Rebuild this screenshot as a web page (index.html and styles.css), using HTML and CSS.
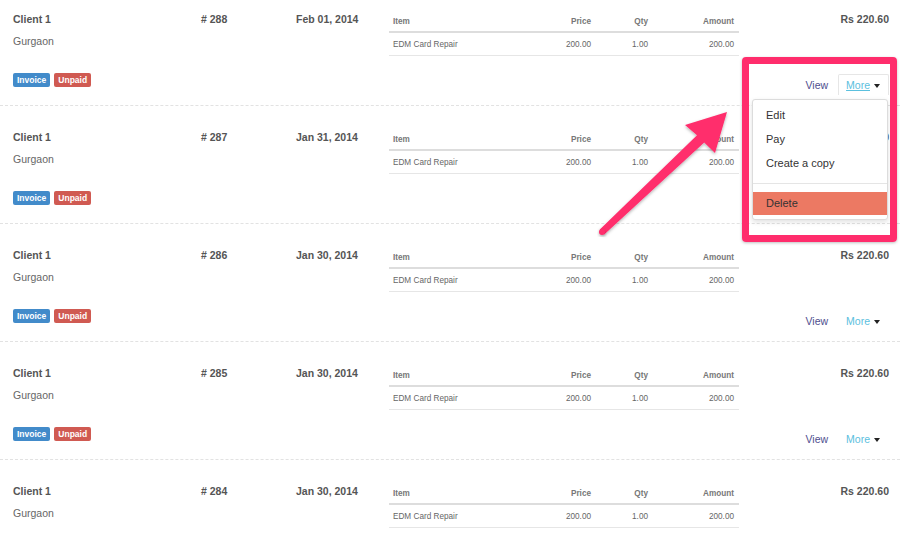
FILE: index.html
```html
<!DOCTYPE html>
<html>
<head>
<meta charset="utf-8">
<link rel="stylesheet" href="styles.css">
</head>
<body>
<div class="list">
  <div class="row">
    <div class="client">
      <div class="name">Client 1</div>
      <div class="city">Gurgaon</div>
      <div class="badges"><span class="badge invoice">Invoice</span><span class="badge unpaid">Unpaid</span></div>
    </div>
    <div class="num"># 288</div>
    <div class="date">Feb 01, 2014</div>
    <table class="items">
      <colgroup><col class="c1"><col class="c2"><col class="c3"><col class="c4"></colgroup>
      <thead><tr><th class="l">Item</th><th>Price</th><th>Qty</th><th>Amount</th></tr></thead>
      <tbody><tr><td class="l">EDM Card Repair</td><td>200.00</td><td>1.00</td><td>200.00</td></tr></tbody>
    </table>
    <div class="side">
      <div class="total">Rs 220.60</div>
      <div class="actions">
        <a class="view">View</a>
        <span class="more open"><span class="more-link u">More</span><span class="caret"></span>
          <div class="menu">
            <div class="mi">Edit</div>
            <div class="mi">Pay</div>
            <div class="mi">Create a copy</div>
            <div class="divider"></div>
            <div class="mi danger">Delete</div>
          </div>
        </span>
      </div>
    </div>
  </div>

  <div class="row">
    <div class="client">
      <div class="name">Client 1</div>
      <div class="city">Gurgaon</div>
      <div class="badges"><span class="badge invoice">Invoice</span><span class="badge unpaid">Unpaid</span></div>
    </div>
    <div class="num"># 287</div>
    <div class="date">Jan 31, 2014</div>
    <table class="items">
      <colgroup><col class="c1"><col class="c2"><col class="c3"><col class="c4"></colgroup>
      <thead><tr><th class="l">Item</th><th>Price</th><th>Qty</th><th>Amount</th></tr></thead>
      <tbody><tr><td class="l">EDM Card Repair</td><td>200.00</td><td>1.00</td><td>200.00</td></tr></tbody>
    </table>
    <div class="side">
      <div class="total">Rs 220.60</div>
    </div>
  </div>

  <div class="row">
    <div class="client">
      <div class="name">Client 1</div>
      <div class="city">Gurgaon</div>
      <div class="badges"><span class="badge invoice">Invoice</span><span class="badge unpaid">Unpaid</span></div>
    </div>
    <div class="num"># 286</div>
    <div class="date">Jan 30, 2014</div>
    <table class="items">
      <colgroup><col class="c1"><col class="c2"><col class="c3"><col class="c4"></colgroup>
      <thead><tr><th class="l">Item</th><th>Price</th><th>Qty</th><th>Amount</th></tr></thead>
      <tbody><tr><td class="l">EDM Card Repair</td><td>200.00</td><td>1.00</td><td>200.00</td></tr></tbody>
    </table>
    <div class="side">
      <div class="total">Rs 220.60</div>
      <div class="actions">
        <a class="view">View</a>
        <span class="more"><span class="more-link">More</span><span class="caret"></span></span>
      </div>
    </div>
  </div>

  <div class="row">
    <div class="client">
      <div class="name">Client 1</div>
      <div class="city">Gurgaon</div>
      <div class="badges"><span class="badge invoice">Invoice</span><span class="badge unpaid">Unpaid</span></div>
    </div>
    <div class="num"># 285</div>
    <div class="date">Jan 30, 2014</div>
    <table class="items">
      <colgroup><col class="c1"><col class="c2"><col class="c3"><col class="c4"></colgroup>
      <thead><tr><th class="l">Item</th><th>Price</th><th>Qty</th><th>Amount</th></tr></thead>
      <tbody><tr><td class="l">EDM Card Repair</td><td>200.00</td><td>1.00</td><td>200.00</td></tr></tbody>
    </table>
    <div class="side">
      <div class="total">Rs 220.60</div>
      <div class="actions">
        <a class="view">View</a>
        <span class="more"><span class="more-link">More</span><span class="caret"></span></span>
      </div>
    </div>
  </div>

  <div class="row last">
    <div class="client">
      <div class="name">Client 1</div>
      <div class="city">Gurgaon</div>
    </div>
    <div class="num"># 284</div>
    <div class="date">Jan 30, 2014</div>
    <table class="items">
      <colgroup><col class="c1"><col class="c2"><col class="c3"><col class="c4"></colgroup>
      <thead><tr><th class="l">Item</th><th>Price</th><th>Qty</th><th>Amount</th></tr></thead>
      <tbody><tr><td class="l">EDM Card Repair</td><td>200.00</td><td>1.00</td><td>200.00</td></tr></tbody>
    </table>
    <div class="side">
      <div class="total">Rs 220.60</div>
    </div>
  </div>
</div>

<div class="highlight"></div>
<svg class="arrow" width="900" height="543" viewBox="0 0 900 543">
  <defs>
    <filter id="sh" x="-20%" y="-20%" width="140%" height="140%">
      <feDropShadow dx="0" dy="1.5" stdDeviation="1.5" flood-color="#000" flood-opacity="0.3"/>
    </filter>
  </defs>
  <polygon filter="url(#sh)" fill="#ff2d6c" points="599.8,229.6 697,135.2 685,125 727,112 715,153 704.2,142.4 604.2,234.4"/>
  <circle filter="url(#sh)" cx="602" cy="232" r="3" fill="#ff2d6c"/>
</svg>
</body>
</html>
```

FILE: styles.css
```css
html, body {
  margin: 0;
  padding: 0;
  background: #fff;
  overflow: hidden;
  width: 900px;
  height: 543px;
  position: relative;
  font-family: "Liberation Sans", Arial, sans-serif;
}

.list {
  margin-top: -12px;
}

.row {
  box-sizing: border-box;
  height: 118px;
  border-bottom: 1px dashed #e2e2e2;
  padding: 24px 11px 0 13px;
  display: grid;
  grid-template-columns: 188px 95px 93px 350px 1fr;
  align-items: start;
}

.row.last {
  height: 80px;
  border-bottom: 0;
}

.name, .num, .date, .total {
  font-size: 10.5px;
  font-weight: bold;
  color: #555;
  line-height: 14px;
}

.city {
  font-size: 10.5px;
  color: #666;
  line-height: 14px;
  margin-top: 8px;
}

.badges {
  margin-top: 25px;
  display: flex;
  gap: 4px;
}

.badge {
  display: inline-block;
  font-size: 8.5px;
  font-weight: bold;
  color: #fff;
  line-height: 14px;
  height: 14px;
  padding: 0 4px;
  border-radius: 2px;
}

.invoice { background: #428bca; }
.unpaid { background: #d05a52; }

.items {
  border-collapse: collapse;
  table-layout: fixed;
  width: 350px;
  font-size: 8.2px;
}

.c1 { width: 137px; }
.c2 { width: 70px; }
.c3 { width: 57px; }
.c4 { width: 86px; }

.items th, .items td {
  padding: 0 5px 0 4px;
  text-align: right;
  white-space: nowrap;
}

.items th {
  height: 19px;
  color: #777;
  font-weight: bold;
  border-bottom: 2px solid #dddddd;
}

.items td {
  height: 21px;
  color: #666;
  border-bottom: 1px solid #e6e6e6;
  padding-top: 1px;
}

.items .l { text-align: left; }

.side {
  display: flex;
  flex-direction: column;
  align-items: flex-end;
}

.total {
  text-align: right;
}

.actions {
  margin-top: 48px;
  display: flex;
  align-items: center;
  gap: 10px;
  font-size: 10.5px;
  line-height: 16px;
}

.view {
  color: #4e4e8e;
}

.more {
  position: relative;
  display: flex;
  align-items: center;
  padding: 2px 8px 2px 7px;
  border: 1px solid transparent;
  border-bottom: 0;
  color: #5bc0de;
}

.more.open {
  border-color: #e6e6e6;
  border-radius: 2px 2px 0 0;
}

.more-link.u {
  text-decoration: underline;
}

.caret {
  width: 0;
  height: 0;
  border-top: 4px solid #222;
  border-left: 3px solid transparent;
  border-right: 3px solid transparent;
  margin-left: 4px;
  margin-top: 1px;
}

.menu {
  position: absolute;
  top: calc(100% + 4px);
  right: 0;
  width: 134px;
  background: #fff;
  border: 1px solid #dcdcdc;
  border-radius: 3px;
  box-shadow: 0 2px 5px rgba(0, 0, 0, 0.12);
  padding: 3px 0 4px;
  z-index: 2;
}

.mi {
  font-size: 11px;
  line-height: 24px;
  color: #333;
  padding: 0 13px 0 13px;
  white-space: nowrap;
}

.divider {
  height: 1px;
  background: #e5e5e5;
  margin: 8px 0;
}

.mi.danger {
  background: #ec7963;
  line-height: 23px;
  color: #333;
}

.highlight {
  position: absolute;
  left: 742px;
  top: 57px;
  width: 155px;
  height: 185px;
  box-sizing: border-box;
  border: 7px solid #ff2d6c;
  border-radius: 4px;
  box-shadow: 0 1px 3px rgba(0, 0, 0, 0.25);
  z-index: 3;
}

.arrow {
  position: absolute;
  left: 0;
  top: 0;
  z-index: 4;
  pointer-events: none;
}
```
